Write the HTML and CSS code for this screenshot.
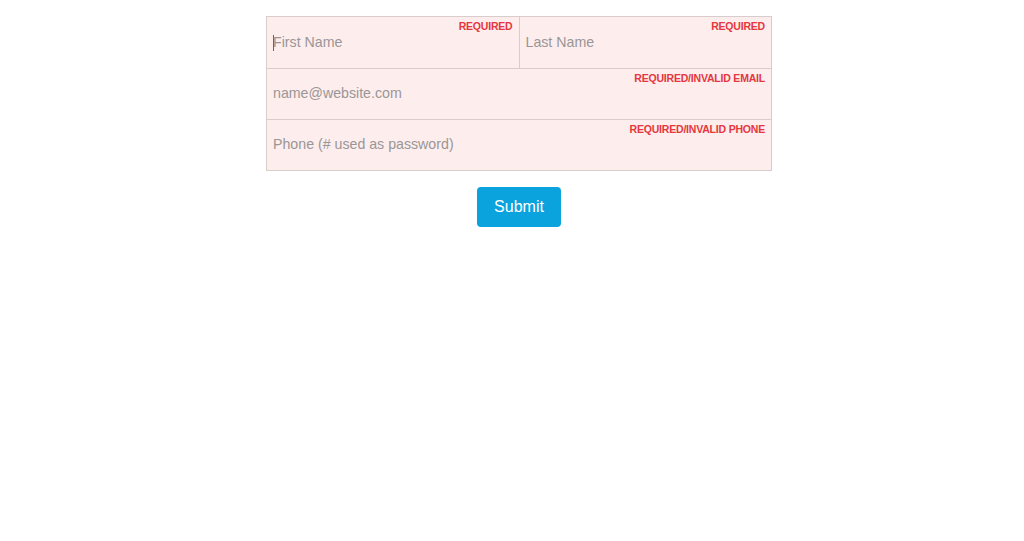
FILE: index.html
```html
<!DOCTYPE html>
<html>
<head>
<meta charset="utf-8">
<link rel="stylesheet" href="styles.css">
</head>
<body>
<form class="signup">
  <div class="fields">
    <div class="row row-split">
      <label class="field field-first">
        <span class="err">REQUIRED</span>
        <span class="caret"></span>
        <input type="text" placeholder="First Name">
      </label>
      <label class="field">
        <span class="err">REQUIRED</span>
        <input type="text" placeholder="Last Name">
      </label>
    </div>
    <div class="row">
      <label class="field">
        <span class="err">REQUIRED/INVALID EMAIL</span>
        <input type="text" placeholder="name@website.com">
      </label>
    </div>
    <div class="row">
      <label class="field">
        <span class="err">REQUIRED/INVALID PHONE</span>
        <input type="text" placeholder="Phone (# used as password)">
      </label>
    </div>
  </div>
  <div class="actions">
    <button type="button" class="submit">Submit</button>
  </div>
</form>
</body>
</html>
```

FILE: styles.css
```css
* { box-sizing: border-box; }
html, body { margin: 0; padding: 0; background: #ffffff; }
body { font-family: "Liberation Sans", Arial, sans-serif; }

.signup {
  width: 506px;
  margin: 16px 0 0 266px;
}

.fields {
  border: 1px solid #d8cccc;
  background: #fdeded;
}

.row {
  display: flex;
  height: 51px;
  border-top: 1px solid #d8cccc;
}
.row:first-child { border-top: none; }

.row-split .field { flex: 1 1 0; }
.row-split .field + .field { border-left: 1px solid #d8cccc; }

.field {
  position: relative;
  flex: 1 1 auto;
  display: flex;
  align-items: flex-end;
  padding: 0 6px 17px 6px;
}

.field input {
  width: 100%;
  border: none;
  outline: none;
  background: transparent;
  padding: 0;
  font-family: "Liberation Sans", Arial, sans-serif;
  font-size: 14.2px;
  line-height: 17px;
  color: #333;
}
.field input::placeholder { color: #9a9696; }

.err {
  position: absolute;
  top: 3px;
  right: 6px;
  font-size: 10.5px;
  font-weight: bold;
  color: #e5373d;
  letter-spacing: -0.2px;
}

.caret {
  position: absolute;
  left: 6px;
  bottom: 17px;
  width: 1px;
  height: 16px;
  background: #666;
}

.actions {
  display: flex;
  justify-content: center;
  margin-top: 16px;
}

.submit {
  width: 84px;
  height: 40px;
  border: none;
  border-radius: 4px;
  background: #0aa3de;
  color: #ffffff;
  font-family: "Liberation Sans", Arial, sans-serif;
  font-size: 16px;
  cursor: pointer;
}
```
